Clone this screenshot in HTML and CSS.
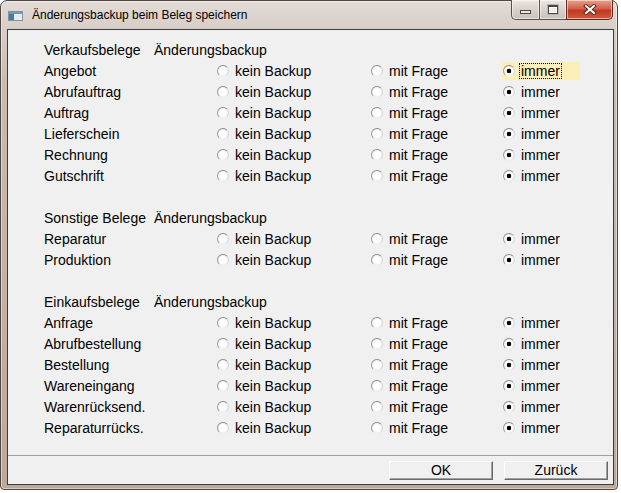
FILE: index.html
```html
<!DOCTYPE html>
<html lang="de">
<head>
  <meta charset="UTF-8">
  <title>Änderungsbackup beim Beleg speichern</title>
  <link rel="stylesheet" href="styles.css">
</head>
<body>
  <div class="window">
    <div class="titlebar">
      <svg class="app-icon" width="15" height="10" viewBox="0 0 15 10">
        <rect x="0.5" y="0.5" width="14" height="9" fill="#e8ecef" stroke="#8a9096"/>
        <rect x="1" y="1" width="5" height="8" fill="#3d7fa6"/>
        <rect x="1" y="1" width="13" height="2" fill="#6b9cc0"/>
      </svg>
      <span class="title">Änderungsbackup beim Beleg speichern</span>
    </div>

    <div class="controls">
      <span class="ctl min"><i></i></span>
      <span class="ctl max"><i></i></span>
      <span class="ctl close">
        <svg width="14" height="11" viewBox="0 0 14 11">
          <path d="M3 2 L11 9 M11 2 L3 9" stroke="#5b2a20" stroke-width="4" stroke-linecap="square"/>
          <path d="M3 2 L11 9 M11 2 L3 9" stroke="#fff" stroke-width="2" stroke-linecap="square"/>
        </svg>
      </span>
    </div>

    <div class="client">
      <div class="groups">
        <div class="group">
          <div class="head"><span>Verkaufsbelege</span><span>Änderungsbackup</span></div>
          <div class="row"><span>Angebot</span>
            <label class="opt"><input type="radio" name="v1"><span>kein Backup</span></label>
            <label class="opt"><input type="radio" name="v1"><span>mit Frage</span></label>
            <label class="opt focus"><input type="radio" name="v1" checked><span>immer</span></label></div>
          <div class="row"><span>Abrufauftrag</span>
            <label class="opt"><input type="radio" name="v2"><span>kein Backup</span></label>
            <label class="opt"><input type="radio" name="v2"><span>mit Frage</span></label>
            <label class="opt"><input type="radio" name="v2" checked><span>immer</span></label></div>
          <div class="row"><span>Auftrag</span>
            <label class="opt"><input type="radio" name="v3"><span>kein Backup</span></label>
            <label class="opt"><input type="radio" name="v3"><span>mit Frage</span></label>
            <label class="opt"><input type="radio" name="v3" checked><span>immer</span></label></div>
          <div class="row"><span>Lieferschein</span>
            <label class="opt"><input type="radio" name="v4"><span>kein Backup</span></label>
            <label class="opt"><input type="radio" name="v4"><span>mit Frage</span></label>
            <label class="opt"><input type="radio" name="v4" checked><span>immer</span></label></div>
          <div class="row"><span>Rechnung</span>
            <label class="opt"><input type="radio" name="v5"><span>kein Backup</span></label>
            <label class="opt"><input type="radio" name="v5"><span>mit Frage</span></label>
            <label class="opt"><input type="radio" name="v5" checked><span>immer</span></label></div>
          <div class="row"><span>Gutschrift</span>
            <label class="opt"><input type="radio" name="v6"><span>kein Backup</span></label>
            <label class="opt"><input type="radio" name="v6"><span>mit Frage</span></label>
            <label class="opt"><input type="radio" name="v6" checked><span>immer</span></label></div>
        </div>

        <div class="group">
          <div class="head"><span>Sonstige Belege</span><span>Änderungsbackup</span></div>
          <div class="row"><span>Reparatur</span>
            <label class="opt"><input type="radio" name="s1"><span>kein Backup</span></label>
            <label class="opt"><input type="radio" name="s1"><span>mit Frage</span></label>
            <label class="opt"><input type="radio" name="s1" checked><span>immer</span></label></div>
          <div class="row"><span>Produktion</span>
            <label class="opt"><input type="radio" name="s2"><span>kein Backup</span></label>
            <label class="opt"><input type="radio" name="s2"><span>mit Frage</span></label>
            <label class="opt"><input type="radio" name="s2" checked><span>immer</span></label></div>
        </div>

        <div class="group">
          <div class="head"><span>Einkaufsbelege</span><span>Änderungsbackup</span></div>
          <div class="row"><span>Anfrage</span>
            <label class="opt"><input type="radio" name="e1"><span>kein Backup</span></label>
            <label class="opt"><input type="radio" name="e1"><span>mit Frage</span></label>
            <label class="opt"><input type="radio" name="e1" checked><span>immer</span></label></div>
          <div class="row"><span>Abrufbestellung</span>
            <label class="opt"><input type="radio" name="e2"><span>kein Backup</span></label>
            <label class="opt"><input type="radio" name="e2"><span>mit Frage</span></label>
            <label class="opt"><input type="radio" name="e2" checked><span>immer</span></label></div>
          <div class="row"><span>Bestellung</span>
            <label class="opt"><input type="radio" name="e3"><span>kein Backup</span></label>
            <label class="opt"><input type="radio" name="e3"><span>mit Frage</span></label>
            <label class="opt"><input type="radio" name="e3" checked><span>immer</span></label></div>
          <div class="row"><span>Wareneingang</span>
            <label class="opt"><input type="radio" name="e4"><span>kein Backup</span></label>
            <label class="opt"><input type="radio" name="e4"><span>mit Frage</span></label>
            <label class="opt"><input type="radio" name="e4" checked><span>immer</span></label></div>
          <div class="row"><span>Warenrücksend.</span>
            <label class="opt"><input type="radio" name="e5"><span>kein Backup</span></label>
            <label class="opt"><input type="radio" name="e5"><span>mit Frage</span></label>
            <label class="opt"><input type="radio" name="e5" checked><span>immer</span></label></div>
          <div class="row"><span>Reparaturrücks.</span>
            <label class="opt"><input type="radio" name="e6"><span>kein Backup</span></label>
            <label class="opt"><input type="radio" name="e6"><span>mit Frage</span></label>
            <label class="opt"><input type="radio" name="e6" checked><span>immer</span></label></div>
        </div>
      </div>

      <div class="buttons">
        <button class="btn">OK</button>
        <button class="btn">Zurück</button>
      </div>
    </div>
  </div>
</body>
</html>
```

FILE: styles.css
```css
body {
  margin: 0;
  background: #fff;
  font-family: 'Liberation Sans', Arial, sans-serif;
  color: #000;
}

.window {
  position: relative;
  width: 618px;
  height: 490px;
  box-sizing: border-box;
  display: flex;
  flex-direction: column;
  padding: 0 3px 4px 6px;
  border: 1px solid #4e4744;
  border-radius: 7px 7px 4px 4px;
  background: linear-gradient(to bottom, #e2dbd6 0, #d7cec7 28px, #c9bbb0 80px, #bba899 100%);
  box-shadow: inset 0 0 0 1px rgba(255, 255, 255, 0.45);
}

.titlebar {
  height: 28px;
  display: flex;
  align-items: center;
  gap: 9px;
}

.app-icon {
  margin-left: 1px;
  margin-top: 1px;
}

.title {
  font-size: 12px;
}

/* caption buttons */
.controls {
  position: absolute;
  top: -1px;
  right: 4px;
  display: flex;
  height: 20px;
}

.ctl {
  display: flex;
  align-items: center;
  justify-content: center;
  box-sizing: border-box;
  height: 20px;
  border: 1px solid #5a514d;
  border-top: none;
  background: linear-gradient(to bottom, #ece7e3, #d9d1cb 50%, #cbc1ba);
  box-shadow: inset 0 0 0 1px rgba(255, 255, 255, 0.5);
}

.ctl.min {
  width: 28px;
  border-right: none;
  border-radius: 0 0 0 5px;
}

.ctl.min i {
  width: 9px;
  height: 2px;
  margin-top: 5px;
  border: 1px solid #4a4644;
  background: #e8e8e8;
}

.ctl.max {
  width: 27px;
  border-right: none;
}

.ctl.max i {
  width: 8px;
  height: 6px;
  border: 1px solid #4a4644;
  border-top-width: 2px;
  background: #eee;
  box-shadow: inset 0 0 0 1px #fff, 0 0 0 1px #bcb5b0;
}

.ctl.close {
  width: 47px;
  border-radius: 0 0 5px 0;
  border-color: #5b2a20;
  background: linear-gradient(to bottom, #e8a08f, #d4604a 45%, #c2391f 55%, #cd5a3e);
}

/* client area */
.client {
  flex: 1;
  display: flex;
  flex-direction: column;
  border: 1px solid #3c3c3c;
  background: #f0f0f0;
  font-size: 14px;
}

.groups {
  flex: 1;
  padding: 10px 0 0 36px;
}

.group + .group {
  margin-top: 21px;
}

.head {
  display: grid;
  grid-template-columns: 110px auto;
  height: 21px;
  line-height: 21px;
}

.row {
  display: grid;
  grid-template-columns: 172px 154px 132px 1fr;
  align-items: center;
  height: 21px;
  line-height: 21px;
}

.opt {
  display: flex;
  align-items: center;
  width: max-content;
  height: 18px;
  margin-bottom: 2px;
  padding-left: 1px;
  box-sizing: border-box;
}

.opt.focus {
  width: 78px;
  background: #fcefb7;
}

.opt input {
  appearance: none;
  -webkit-appearance: none;
  width: 12px;
  height: 12px;
  margin: 0 4px 0 0;
  box-sizing: border-box;
  border-radius: 50%;
  border: 1px solid;
  border-color: #8a8a8a #d6d6d6 #ececec #9c9c9c;
  background: radial-gradient(circle, #fff 0 3px, #f1f1f1 5px);
}

.opt input:checked {
  background: radial-gradient(circle, #000 0 2px, #fff 2.6px 3px, #f1f1f1 5px);
}

.opt span {
  border: 1px dotted transparent;
  padding: 0 1px;
  line-height: 14px;
}

.opt.focus span {
  border-color: #000;
}

/* bottom button bar */
.buttons {
  display: flex;
  justify-content: flex-end;
  gap: 11px;
  padding: 5px 5px 4px;
  border-top: 1px solid #a0a0a0;
}

.btn {
  width: 104px;
  height: 19px;
  padding: 0;
  font-family: inherit;
  font-size: 14px;
  line-height: 15px;
  color: #000;
  background: #f0f0f0;
  border: 1px solid;
  border-color: #fff #696969 #696969 #fff;
  box-shadow: inset -1px -1px #a0a0a0;
}
```
